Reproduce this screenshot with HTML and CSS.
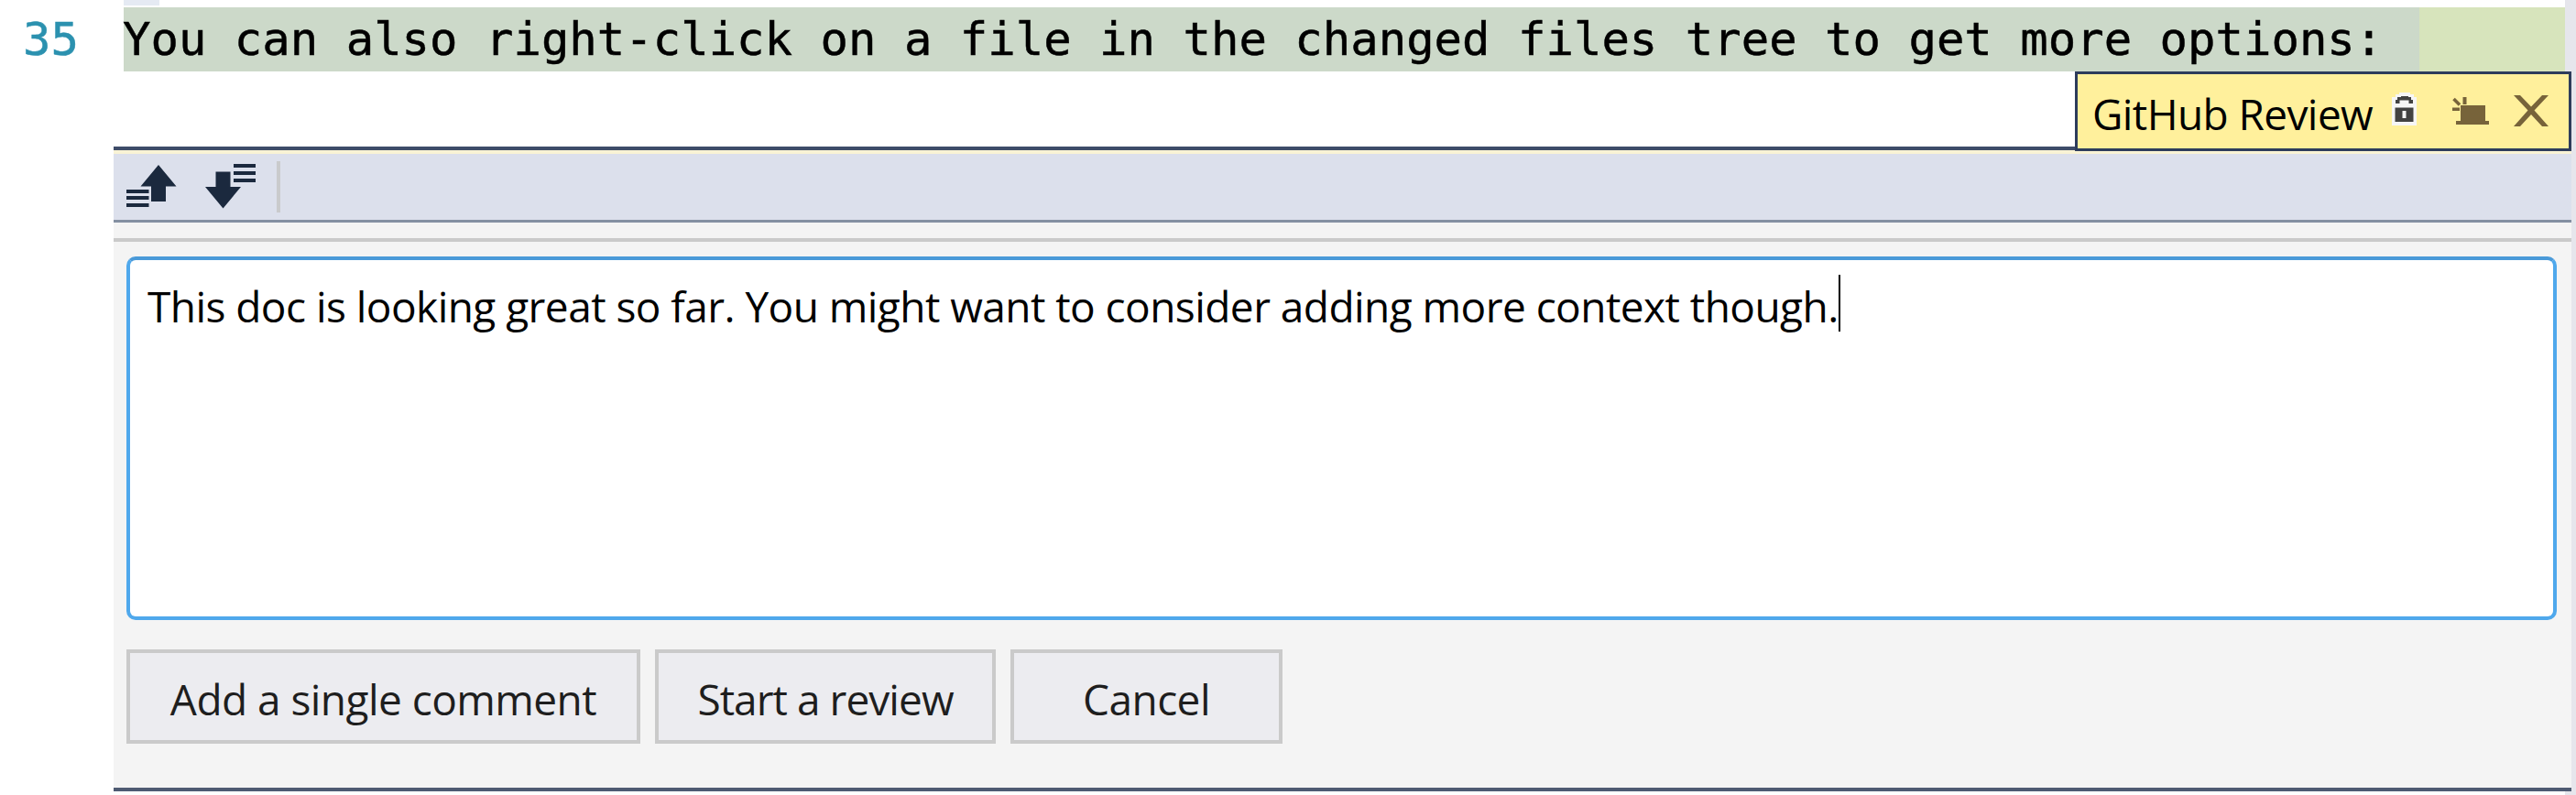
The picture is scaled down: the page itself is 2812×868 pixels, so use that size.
FILE: index.html
```html
<!DOCTYPE html>
<html lang="en">
<head>
<meta charset="utf-8">
<title>GitHub Review</title>
<link rel="stylesheet" href="styles.css">
</head>
<body>
<main class="editor">
  <div class="previous-line"><span class="previous-selection"></span></div>
  <div class="code-line">
    <span class="line-number">35</span>
    <div class="code"><span class="selection">You can also right-click on a file in the changed files tree to get more options:</span></div>
  </div>
  <div class="tab-row">
    <div class="tab">
      <span class="tab-title">GitHub Review</span>
      <svg class="lock" viewBox="0 0 27 36"><path fill="#f6f6f6" d="M0 5h4V2h4V0h12v2h4v3h3v31H0z"/><path fill="#424242" d="M3.500 16.500h20v15.500h-20zM4 12V8h2V5h4V4h8v1h3v3h2v4h-4.500V8.500h-10V12z"/><path fill="#f6f6f6" d="M11.500 20h4v8h-4z"/></svg>
      <svg class="keep-open" viewBox="0 0 40 32"><path fill="#77633a" d="M9 9h27v17h4v4H4v-4h5zM11.500 0h4v8h-4zM0 11.500h8v3.500H0z"/><path stroke="#77633a" stroke-width="3.500" d="M1.500 2l6.500 6.500"/></svg>
      <svg class="close" viewBox="0 0 40 34"><path fill="#77633a" d="M1 0h7l12 12.500L32 0h7L23.500 16.500 39 34h-7L20 21 8 34H1l15.500-17.500z"/></svg>
    </div>
  </div>
  <section class="panel">
    <div class="toolbar">
      <svg class="nav-icon" viewBox="0 0 54 48"><path fill="#1b293e" d="M35 0l19.500 23.500H43V40H27V23.500H15.500zM0 27h24.500v4H0zM0 34h24.500v4H0zM0 42h24.500v4H0z"/></svg>
      <svg class="nav-icon nav-next" viewBox="0 0 54 48"><path fill="#1b293e" d="M11.500 8.500h16V25H39L19.500 48.500 0 25h11.500zM31 0h24v4H31zM31 8h24v4H31zM31 16h24v4H31z"/></svg>
      <span class="separator"></span>
    </div>
    <div class="divider"></div>
    <div class="comment-form">
      <div class="comment-input"><span class="comment-text">This doc is looking great so far. You might want to consider adding more context though.</span><span class="caret"></span></div>
      <div class="actions">
        <button class="button add-comment" type="button"><span>Add a single comment</span></button>
        <button class="button start-review" type="button"><span>Start a review</span></button>
        <button class="button cancel" type="button"><span>Cancel</span></button>
      </div>
    </div>
  </section>
</main>
</body>
</html>
```
FILE: styles.css
```css
* { box-sizing: border-box; }
body { margin: 0; background: #fff; font-family: "Open Sans", "Noto Sans", sans-serif; }
svg { display: block; overflow: visible; flex: none; }
.editor { width: 2812px; height: 868px; overflow: hidden; background: linear-gradient(90deg, #fff 2800px, #e6e6ec 2800px); }
.previous-line { height: 8px; padding-left: 135px; }
.previous-selection { display: block; width: 39px; height: 6px; background: #e5eaf3; }
.code-line { display: flex; height: 70px; font: 50.6px/70px "DejaVu Sans Mono", monospace; }
.line-number { width: 135px; padding-left: 25px; color: #2b91af; -webkit-text-stroke: 0.5px #2b91af; }
.code { width: 2665px; background: #d7e4bc; }
.selection { display: block; width: 2506px; height: 70px; background: #ccd9c9; color: #000; white-space: pre; text-indent: -1px; -webkit-text-stroke: 0.5px #000; }
.tab-row { display: flex; justify-content: flex-end; height: 82px; padding-right: 5px; }
.tab { display: flex; z-index: 1; width: 542px; height: 87px; padding: 0 19px 0 16px; border: 3px solid #2d3c5b; background: #fff09c; }
.tab-title { width: 307px; font-size: 46px; line-height: 86px; letter-spacing: -0.6px; white-space: nowrap; }
.lock { width: 27px; height: 36px; margin: 20px 0 0 20px; }
.keep-open { width: 40px; height: 32px; margin: 25px 0 0 39px; }
.close { width: 40px; height: 34px; margin: 23px 0 0 26px; }
.panel { width: 2683px; height: 704px; margin-left: 124px; border-top: 4px solid #3e4c69; border-bottom: 4px solid #4e5a72; background: #f4f4f4; }
.toolbar { display: flex; height: 79px; padding: 12px 0 0 14px; border-top: 4px solid #f9f3d5; border-bottom: 3px solid #8490a2; background: #dce0ec; }
.nav-icon { width: 54px; height: 48px; }
.nav-next { margin-left: 32px; margin-top: -1px; }
.separator { width: 4px; height: 56px; margin: -4px 0 0 24px; background: #c9cacc; }
.divider { height: 21px; border-bottom: 4px solid #cacaca; }
.comment-form { padding: 16px 16px 0 14px; }
.comment-input { display: flex; height: 397px; padding: 16px 19px; border: 4px solid #4fa8ec; border-top-color: #4a9ad9; border-radius: 10px; background: #fff; }
.comment-text { font-size: 46px; line-height: 68px; letter-spacing: -0.55px; white-space: nowrap; }
.caret { width: 2px; height: 62px; background: #000; }
.actions { display: flex; gap: 16px; margin-top: 32px; }
.button { height: 103px; padding: 4px 0 0; border: 4px solid #cacaca; border-radius: 0; background: #ececf0; color: #1e1e1e; font: 46px/90px "Open Sans", "Noto Sans", sans-serif; letter-spacing: -0.55px; white-space: nowrap; }
.add-comment { width: 561px; }
.start-review { width: 372px; letter-spacing: -0.95px; }
.cancel { width: 297px; }
```
